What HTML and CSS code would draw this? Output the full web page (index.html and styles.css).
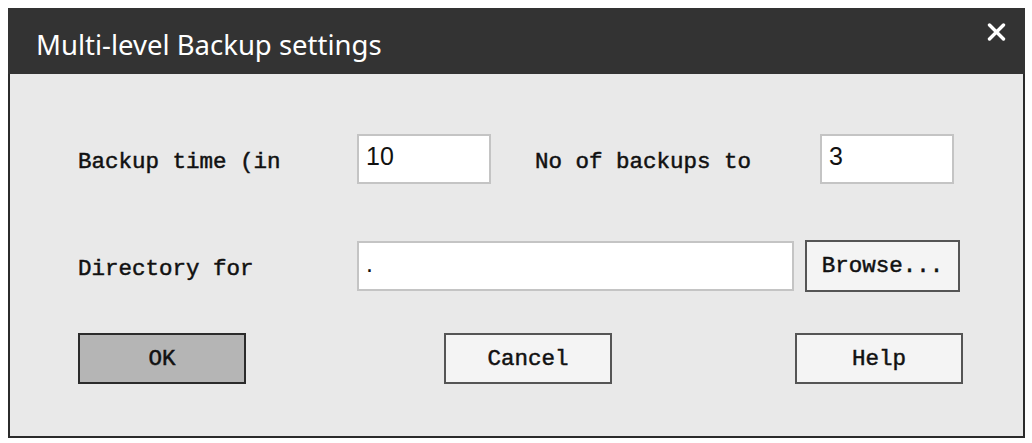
FILE: index.html
```html
<!DOCTYPE html>
<html lang="en">
<head>
    <meta charset="UTF-8">
    <meta name="viewport" content="width=device-width, initial-scale=1.0">
    <title>Multi-level Backup settings</title>
    <link rel="stylesheet" href="styles.css">
</head>
<body>
    <div class="dialog">
        <div class="titlebar">
            <span class="title">Multi-level Backup settings</span>
            <svg class="close" width="19" height="18" viewBox="0 0 19 18">
                <path d="M2.5 2 L16.5 16 M16.5 2 L2.5 16" stroke="#ffffff" stroke-width="3.4" stroke-linecap="round"/>
            </svg>
        </div>
        <div class="content">
            <div class="row row-first">
                <span class="label label-time">Backup time (in</span>
                <div class="field field-short">10</div>
                <span class="label label-count">No of backups to</span>
                <div class="field field-short">3</div>
            </div>
            <div class="row row-dir">
                <span class="label label-time">Directory for</span>
                <div class="field field-long">.</div>
                <button class="btn btn-browse">Browse...</button>
            </div>
            <div class="row row-buttons">
                <button class="btn btn-main btn-ok">OK</button>
                <button class="btn btn-main btn-cancel">Cancel</button>
                <button class="btn btn-main btn-help">Help</button>
            </div>
        </div>
    </div>
</body>
</html>
```

FILE: styles.css
```css
body {
    margin: 0;
    background-color: #ffffff;
}

.dialog {
    margin: 8px 0 0 8px;
    width: 1017px;
    height: 430px;
    display: flex;
    flex-direction: column;
}

.titlebar {
    height: 66px;
    background-color: #333333;
    color: #ffffff;
    display: flex;
    align-items: center;
    justify-content: space-between;
    padding: 0 19px 0 28px;
    box-sizing: border-box;
}

.title {
    font-family: 'Noto Sans', sans-serif;
    font-size: 27.5px;
    margin-top: 6px;
}

.close {
    margin-top: -18px;
}

.content {
    flex: 1;
    background-color: #e9e9e9;
    border: 2px solid #2b2b2b;
    border-top: none;
    padding-left: 68px;
    font-family: 'Liberation Mono', monospace;
    font-size: 22.5px;
    -webkit-text-stroke: 0.5px #111111;
    color: #111111;
}

.row {
    display: flex;
    align-items: center;
}

.row-first {
    margin-top: 60px;
}

.row-dir {
    margin-top: 56px;
}

.row-buttons {
    margin-top: 41px;
}

.label-time {
    width: 279px;
    margin-top: 6px;
}

.label-count {
    width: 285px;
    margin-left: 44px;
    margin-top: 6px;
}

.field {
    height: 50px;
    background-color: #ffffff;
    border: 2px solid #c4c4c4;
    box-sizing: border-box;
    font-family: 'Liberation Sans', sans-serif;
    font-size: 25px;
    -webkit-text-stroke: 0;
    padding: 6px 0 0 7px;
    color: #111111;
}

.field-short {
    width: 134px;
}

.field-long {
    width: 437px;
}

.btn {
    font-family: 'Liberation Mono', monospace;
    font-size: 22.5px;
    -webkit-text-stroke: 0.5px #111111;
    color: #111111;
    background-color: #f4f4f4;
    border: 2px solid #555555;
    box-sizing: border-box;
    padding: 0;
}

.btn-browse {
    width: 155px;
    height: 52px;
    margin-left: 11px;
}

.btn-main {
    width: 168px;
    height: 51px;
}

.btn-ok {
    background-color: #b5b5b5;
    border-color: #2b2b2b;
}

.btn-cancel {
    margin-left: 198px;
}

.btn-help {
    margin-left: 183px;
}
```
